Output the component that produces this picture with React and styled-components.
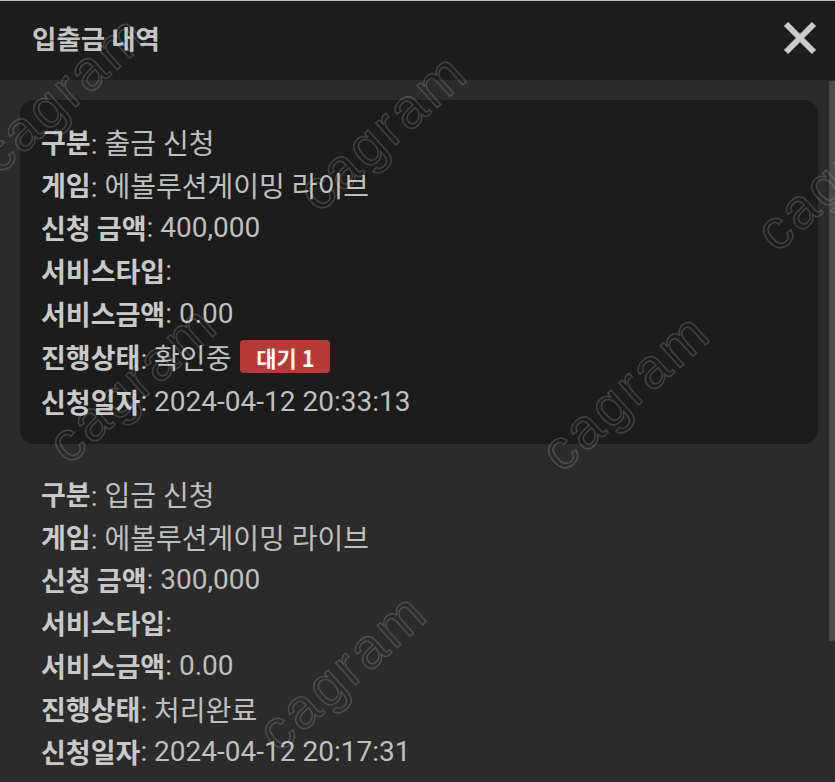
import styled, { createGlobalStyle } from "styled-components";

const GlobalStyle = createGlobalStyle`
  html, body {
    margin: 0;
    padding: 0;
    background: #2b2b2b;
    overflow: hidden;
  }
  * { box-sizing: border-box; }
`;

const Page = styled.div`
  position: relative;
  width: 835px;
  height: 782px;
  overflow: hidden;
  background: #2b2b2b;
  font-family: Roboto, "Noto Sans CJK KR", sans-serif;
  border-top: 1px solid #b8b8b8;
`;

const Header = styled.header`
  display: flex;
  align-items: center;
  justify-content: space-between;
  height: 79px;
  padding: 0 15px 6px 32px;
  background: #1d1d1d;
`;

const Title = styled.h1`
  margin: 0;
  font-size: 26.5px;
  font-weight: 700;
  color: #c4c4c4;
  font-family: "Noto Sans CJK KR", sans-serif;
`;

const CloseButton = styled.button`
  display: flex;
  align-items: center;
  justify-content: center;
  width: 40px;
  height: 40px;
  padding: 0;
  border: none;
  background: none;
`;

const List = styled.div`
  display: flex;
  flex-direction: column;
  gap: 8px;
  padding: 20px 17px 0 20px;
`;

const Entry = styled.div`
  display: flex;
  flex-direction: column;
  padding: 20px 21px 20px 21px;
  border-radius: 14px;
  background: ${(p) => (p.$active ? "#1c1c1c" : "transparent")};
`;

const Row = styled.div`
  display: flex;
  align-items: center;
  height: ${(p) => (p.$tall ? "46px" : "43px")};
  font-size: 28px;
  color: #bfbfbf;
  white-space: nowrap;
`;

const Label = styled.span`
  font-size: 27px;
  font-weight: 700;
  color: #c9c9c9;
  font-family: "Noto Sans CJK KR", sans-serif;
`;

const Value = styled.span`
  font-weight: 400;
`;

const Badge = styled.span`
  display: inline-flex;
  align-items: center;
  justify-content: center;
  width: 90px;
  height: 33px;
  margin-left: 9px;
  border-radius: 4px;
  background: #b73a35;
  color: #fff;
  font-size: 22px;
  font-weight: 700;
  font-family: "Noto Sans CJK KR", sans-serif;
`;

const ScrollThumb = styled.div`
  position: absolute;
  right: 0;
  top: 80px;
  width: 6px;
  height: 560px;
  background: #4b4b4b;
`;

const Watermark = styled.span`
  position: absolute;
  left: ${(p) => p.$x}px;
  top: ${(p) => p.$y}px;
  transform: translate(-50%, -50%) rotate(-42deg);
  font-family: "Liberation Sans", sans-serif;
  font-size: 56px;
  letter-spacing: 3px;
  color: transparent;
  -webkit-text-stroke: 1.5px rgba(255, 255, 255, 0.17);
  pointer-events: none;
  white-space: nowrap;
`;

const entries = [
  {
    active: true,
    kind: "출금 신청",
    amount: "400,000",
    status: "확인중",
    badge: "대기 1",
    date: "2024-04-12 20:33:13",
  },
  {
    active: false,
    kind: "입금 신청",
    amount: "300,000",
    status: "처리완료",
    date: "2024-04-12 20:17:31",
  },
];

const marks = [
  [62, 92],
  [382, 130],
  [840, 170],
  [132, 382],
  [625, 390],
  [342, 670],
];

const App = () => {
  return (
    <>
      <GlobalStyle />
      <Page>
        <Header>
          <Title>입출금 내역</Title>
          <CloseButton aria-label="close">
            <svg width="36" height="36" viewBox="0 0 36 36">
              <path d="M4 4 L32 32 M32 4 L4 32" stroke="#cbcbcb" strokeWidth="6" />
            </svg>
          </CloseButton>
        </Header>
        <List>
          {entries.map((e, i) => (
            <Entry key={i} $active={e.active}>
              <Row>
                <Label>구분</Label>
                <Value>: {e.kind}</Value>
              </Row>
              <Row>
                <Label>게임</Label>
                <Value>: 에볼루션게이밍 라이브</Value>
              </Row>
              <Row>
                <Label>신청 금액</Label>
                <Value>: {e.amount}</Value>
              </Row>
              <Row>
                <Label>서비스타입</Label>
                <Value>:</Value>
              </Row>
              <Row>
                <Label>서비스금액</Label>
                <Value>: 0.00</Value>
              </Row>
              <Row>
                <Label>진행상태</Label>
                <Value>: {e.status}</Value>
                {e.badge && <Badge>{e.badge}</Badge>}
              </Row>
              <Row $tall={!!e.badge}>
                <Label>신청일자</Label>
                <Value>: {e.date}</Value>
              </Row>
            </Entry>
          ))}
        </List>
        <ScrollThumb />
        {marks.map(([x, y], i) => (
          <Watermark key={i} $x={x} $y={y}>
            cagram
          </Watermark>
        ))}
      </Page>
    </>
  );
};

export default App;
